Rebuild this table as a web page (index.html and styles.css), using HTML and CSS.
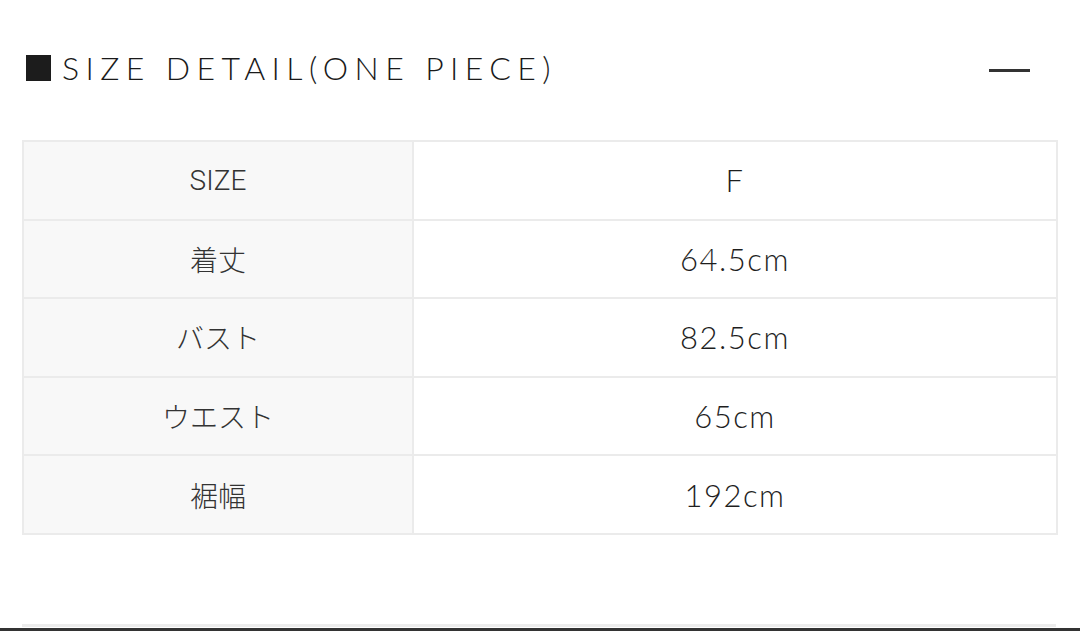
FILE: index.html
```html
<!DOCTYPE html>
<html lang="ja">
<head>
<meta charset="utf-8">
<link rel="stylesheet" href="styles.css">
</head>
<body>
<div class="page">
  <div class="head">
    <h2 class="title"><span class="sq"></span>SIZE DETAIL(ONE PIECE)</h2>
    <span class="minus"></span>
  </div>
  <table class="size">
    <tr><th>SIZE</th><td>F</td></tr>
    <tr><th>着丈</th><td>64.5cm</td></tr>
    <tr><th>バスト</th><td>82.5cm</td></tr>
    <tr><th>ウエスト</th><td>65cm</td></tr>
    <tr><th>裾幅</th><td>192cm</td></tr>
  </table>
  <div class="rule"></div>
</div>
<div class="bottom"></div>
</body>
</html>
```
FILE: styles.css
```css
html, body { margin: 0; padding: 0; background: #fff; }
body { width: 1080px; height: 631px; overflow: hidden; position: relative; }
.page { padding: 0 22px; }
.head {
  height: 140px;
  display: flex;
  justify-content: space-between;
  align-items: flex-start;
}
.title {
  margin: 0;
  padding-top: 48px;
  padding-left: 4px;
  display: flex;
  align-items: center;
  font-family: "Lato", "Noto Sans", sans-serif;
  font-weight: 300;
  font-size: 32px;
  letter-spacing: 6.4px;
  color: #1a1a1a;
  line-height: 40px;
}
.sq {
  display: inline-block;
  width: 25px;
  height: 26px;
  background: #1c1c1c;
  margin-right: 11px;
}
.minus {
  display: block;
  width: 41px;
  height: 3px;
  background: #333;
  margin-top: 69px;
  margin-right: 28px;
}
.size {
  width: 1036px;
  border-collapse: collapse;
  font-family: "Roboto", "Noto Sans CJK JP", sans-serif;
  font-size: 28px;
  font-weight: 300;
  color: #333;
}
.size th, .size td {
  border: 2px solid #ebebeb;
  height: 76.6px;
  padding: 0;
  text-align: center;
  font-weight: 300;
}
.size th { width: 388px; background: #f8f8f8; }
.size td {
  font-family: "Lato", "Noto Sans", sans-serif;
  font-size: 31px;
  font-weight: 300;
  letter-spacing: 1.5px;
  color: #1e1e1e;
}
.rule {
  margin-top: 89px;
  height: 3px;
  width: 1034px;
  background: #ececec;
}
.bottom {
  position: absolute;
  left: 0; right: 0; bottom: 0;
  height: 3px;
  background: #333;
}
```
